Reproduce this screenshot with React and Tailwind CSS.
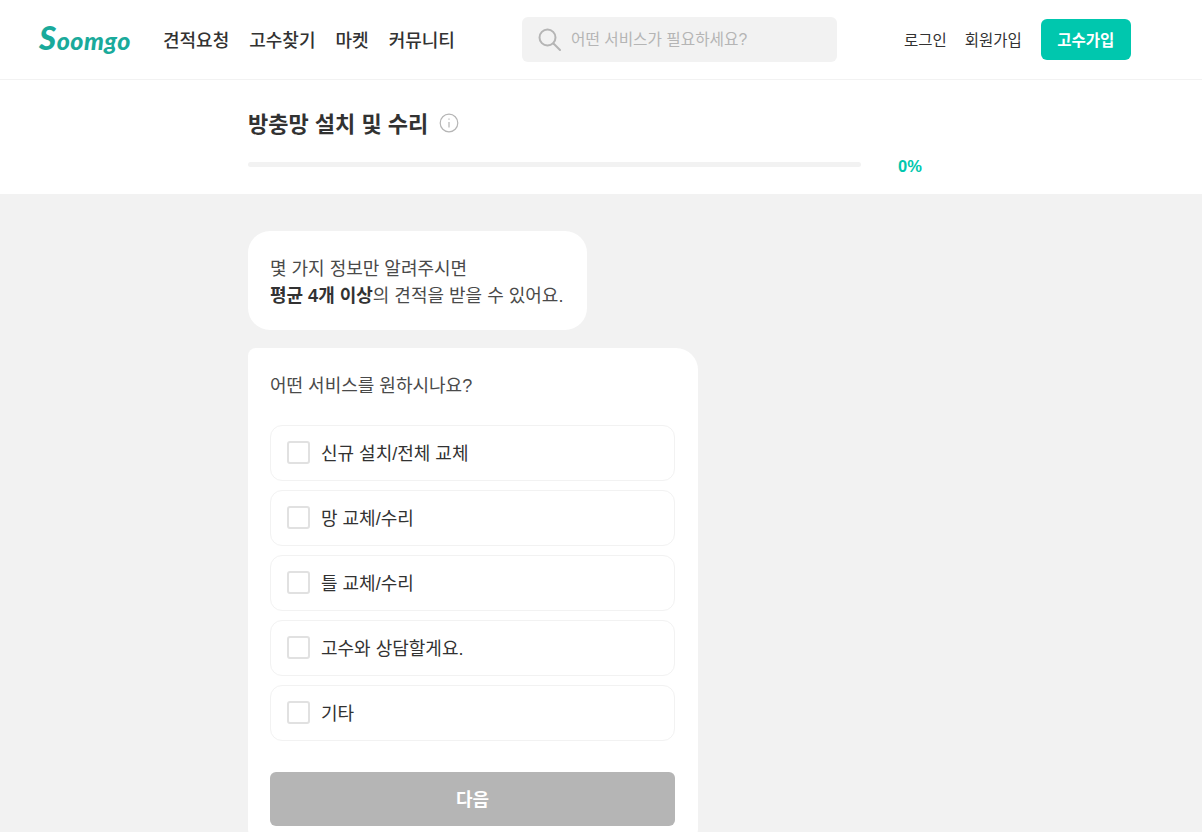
const navItems = ['견적요청', '고수찾기', '마켓', '커뮤니티'];
const options = ['신규 설치/전체 교체', '망 교체/수리', '틀 교체/수리', '고수와 상담할게요.', '기타'];

export default function App() {
  return (
    <div className="h-[832px] overflow-hidden bg-[#f2f2f2] text-[#323232] font-['Liberation_Sans','Noto_Sans_CJK_KR',sans-serif]">
      {/* Header */}
      <header className="h-20 bg-white border-b border-[#f2f2f2] flex items-center pl-[39px]">
        <div className="w-[124px] text-[#1aaa9b] font-['Lato',sans-serif] font-black italic text-[25px] tracking-[0.5px] leading-none -mt-1">
          <span className="text-[33px]">S</span>oomgo
        </div>
        <nav className="flex gap-5 text-[18px] font-medium w-[359px] mt-[3px]">
          {navItems.map((item) => (
            <a key={item}>{item}</a>
          ))}
        </nav>
        <div className="w-[315px] h-[45px] rounded-md bg-[#f2f2f2] flex items-center pl-4 gap-[10px] -mt-[1px]">
          <svg className="w-[23px] h-[23px]" viewBox="0 0 23 23" fill="none" stroke="#b5b5b5" strokeWidth="2">
            <circle cx="9.5" cy="9.5" r="8" />
            <path d="M15.5 15.5l6.5 6.5" strokeLinecap="round" />
          </svg>
          <span className="text-[15.7px] text-[#b5b5b5] pt-[2px]">어떤 서비스가 필요하세요?</span>
        </div>
        <div className="flex items-center ml-[67px] text-[15.5px]">
          <a className="mr-[18px] pt-[2px]">로그인</a>
          <a className="mr-[19px] pt-[2px]">회원가입</a>
          <button className="w-[90px] h-[41px] pt-[2px] rounded-md bg-[#00c7ae] text-white font-bold">고수가입</button>
        </div>
      </header>

      {/* Title and progress */}
      <section className="h-[114px] bg-white pl-[248px] pt-[26px]">
        <div className="flex items-center gap-[11px] h-9">
          <h1 className="text-[22px] font-bold">방충망 설치 및 수리</h1>
          <svg className="w-[20px] h-[20px] -mt-[3px]" viewBox="0 0 20 20" fill="none" stroke="#b5b5b5">
            <circle cx="10" cy="10" r="8.8" strokeWidth="1.2" />
            <path d="M10 9v5.5M10 5.6v1.2" strokeWidth="1.2" />
          </svg>
        </div>
        <div className="flex items-center mt-[9px]">
          <div className="w-[613px] h-[5px] rounded-full bg-[#f2f2f2]" />
          <span className="ml-[37px] mt-[3px] text-[#00c7ae] text-[16.5px] font-bold">0%</span>
        </div>
      </section>

      {/* Form */}
      <main className="pl-[248px] pt-[37px]">
        <div className="w-fit bg-white rounded-[22px] pl-[22px] pr-[24px] pt-[25px] pb-[20px] text-[18px] leading-[27px] text-[#4a4a4a]">
          <p>몇 가지 정보만 알려주시면</p>
          <p>
            <strong className="font-bold text-[#323232]">평균 4개 이상</strong>의 견적을 받을 수 있어요.
          </p>
        </div>
        <div className="w-[450px] mt-[18px] bg-white rounded-[22px] rounded-tl-lg pl-[22px] pr-[23px] pt-[23px] pb-6">
          <p className="text-[18px] leading-[30px] mb-[24px] text-[#4a4a4a]">어떤 서비스를 원하시나요?</p>
          <div className="flex flex-col gap-[9px]">
            {options.map((option) => (
              <label key={option} className="h-14 border border-[#f2f2f2] rounded-xl flex items-center pl-4 gap-[11px]">
                <span className="w-[23px] h-[23px] -mt-px rounded-[3px] border-2 border-[#e1e1e1] bg-white" />
                <span className="text-[18px] pt-[2px]">{option}</span>
              </label>
            ))}
          </div>
          <button className="w-full h-[54px] pt-[2px] mt-[31px] rounded-md bg-[#b5b5b5] text-white text-[18px] font-bold">다음</button>
        </div>
      </main>
    </div>
  );
}
